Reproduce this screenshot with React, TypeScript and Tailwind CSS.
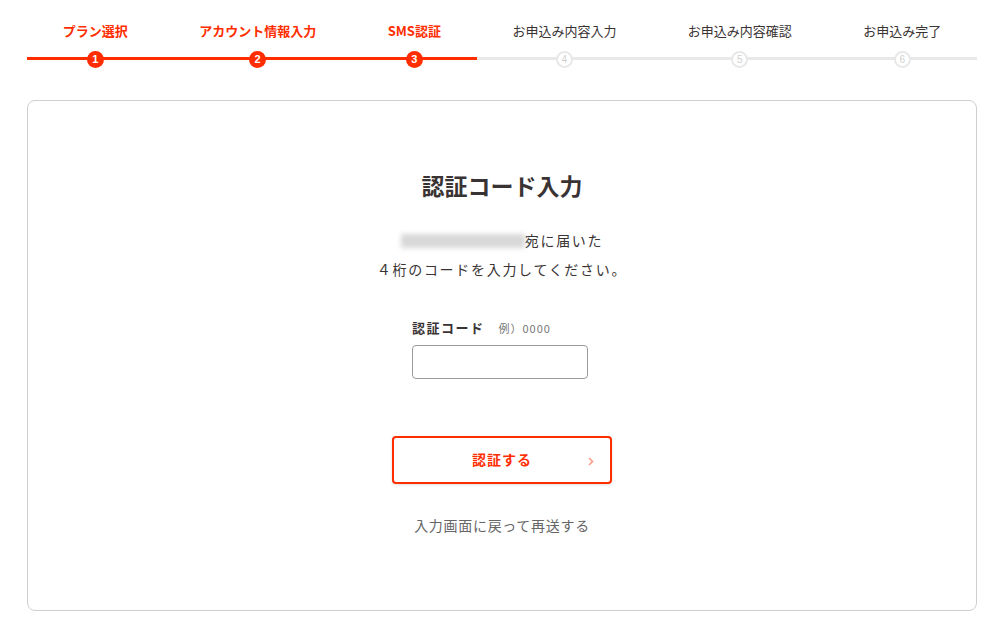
import React from 'react'

const steps = [
  { label: 'プラン選択', done: true },
  { label: 'アカウント情報入力', done: true },
  { label: 'SMS認証', done: true },
  { label: 'お申込み内容入力', done: false },
  { label: 'お申込み内容確認', done: false },
  { label: 'お申込み完了', done: false },
]

function Stepper() {
  return (
    <div className="flex flex-row px-[27px] pt-[22px]">
      {steps.map((s, i) => (
        <div key={s.label} className="flex-auto flex flex-col items-center">
          <div
            className={
              s.done
                ? 'text-[13px] leading-[18px] font-bold text-[#ff2d00] whitespace-nowrap'
                : 'text-[13px] leading-[18px] text-[#3a3333] whitespace-nowrap'
            }
          >
            {s.label}
          </div>
          <div className="relative w-full h-[18px] mt-[10px] flex items-center justify-center">
            <div
              className={
                s.done
                  ? 'absolute left-0 right-0 top-[7px] h-[3px] bg-[#ff2d00]'
                  : 'absolute left-0 right-0 top-[7px] h-[3px] bg-[#e8e8e8]'
              }
            ></div>
            {s.done ? (
              <div className="relative w-[17px] h-[17px] rounded-full bg-[#ff2d00] text-white text-[11px] font-bold flex items-center justify-center font-['Liberation_Sans',sans-serif]">
                {i + 1}
              </div>
            ) : (
              <div className="relative w-[17px] h-[17px] rounded-full bg-white border-2 border-[#e8e8e8] text-[#d0d0d0] text-[10px] flex items-center justify-center font-['Liberation_Sans',sans-serif]">
                {i + 1}
              </div>
            )}
          </div>
        </div>
      ))}
    </div>
  )
}

export default function App() {
  return (
    <div className="w-[1004px] h-[639px] bg-white font-['Noto_Sans_CJK_JP','Noto_Sans',sans-serif] text-[#3a3333]">
      <Stepper />
      <div className="mx-[27px] mt-[32px] h-[511px] border border-[#cfcfcf] rounded-[8px] flex flex-col items-center pt-[68px]">
        <h1 className="text-[23px] leading-[32px] font-bold">認証コード入力</h1>
        <div className="mt-[25px] text-[14px] leading-[29px] tracking-[1.7px] text-center">
          <div className="flex items-center justify-center">
            <span className="inline-block w-[124px] h-[14px] bg-[#d8d8d8] blur-[2.5px]"></span>
            <span>宛に届いた</span>
          </div>
          <div>４桁のコードを入力してください。</div>
        </div>
        <div className="mt-[34px] w-[176px] mr-[4px]">
          <div className="flex items-baseline">
            <span className="text-[13px] font-bold tracking-[1.5px]">認証コード</span>
            <span className="ml-[14px] text-[11px] text-[#777] tracking-[1px]">例）0000</span>
          </div>
          <div className="mt-[7px] h-[34px] border border-[#9a9a9a] rounded-[4px] bg-white"></div>
        </div>
        <button className="mt-[57px] w-[220px] h-[48px] border-2 border-[#ff2d00] rounded-[4px] bg-white relative flex items-center justify-center shadow-[0_1px_3px_rgba(0,0,0,0.12)]">
          <span className="text-[14px] font-bold text-[#ff2d00] tracking-[1px]">認証する</span>
          <svg
            className="absolute right-[16px] top-[19px]"
            width="6"
            height="9"
            viewBox="0 0 6 9"
            fill="none"
          >
            <path d="M1 1 L4.5 4.5 L1 8" stroke="#ff9a85" strokeWidth="1.6" />
          </svg>
        </button>
        <div className="mt-[31px] text-[14px] text-[#666] tracking-[0.7px]">入力画面に戻って再送する</div>
      </div>
    </div>
  )
}
